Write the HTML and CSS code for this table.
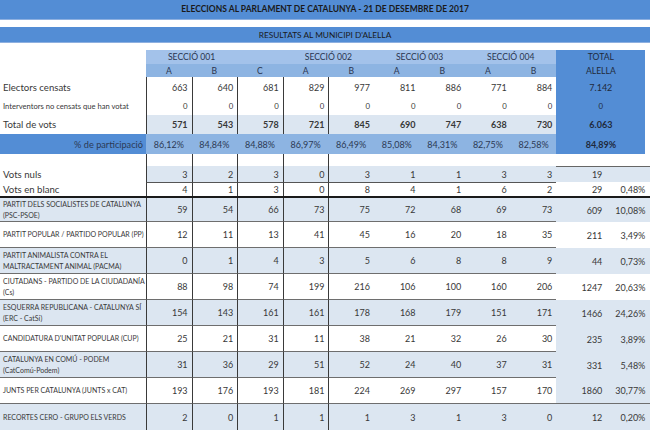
FILE: index.html
```html
<!DOCTYPE html>
<html lang="ca">
<head>
    <meta charset="UTF-8">
    <title>Eleccions al Parlament de Catalunya - Alella</title>
    <link rel="stylesheet" href="styles.css">
</head>
<body>
    <div class="sheet">
        <div class="banner title">ELECCIONS AL PARLAMENT DE CATALUNYA - 21 DE DESEMBRE DE 2017</div>
        <div class="banner subtitle">RESULTATS AL MUNICIPI D'ALELLA</div>

        <div class="row head-sec">
            <div></div>
            <div class="span2">SECCIÓ 001</div>
            <div></div>
            <div class="span2">SECCIÓ 002</div>
            <div class="span2">SECCIÓ 003</div>
            <div class="span2">SECCIÓ 004</div>
            <div class="tot">TOTAL</div>
        </div>
        <div class="row head-ab">
            <div></div>
            <div>A</div><div>B</div><div>C</div>
            <div>A</div><div>B</div>
            <div>A</div><div>B</div>
            <div>A</div><div>B</div>
            <div class="tot">ALELLA</div>
        </div>

        <div class="row lined electors">
            <div class="label">Electors censats</div>
            <div>663</div><div>640</div><div>681</div><div>829</div><div>977</div>
            <div>811</div><div>886</div><div>771</div><div>884</div>
            <div class="tot">7.142</div>
        </div>
        <div class="row lined interv">
            <div class="label">Interventors no censats que han votat</div>
            <div>0</div><div>0</div><div>0</div><div>0</div><div>0</div>
            <div>0</div><div>0</div><div>0</div><div>0</div>
            <div class="tot">0</div>
        </div>
        <div class="row lined votes">
            <div class="label">Total de vots</div>
            <div>571</div><div>543</div><div>578</div><div>721</div><div>845</div>
            <div>690</div><div>747</div><div>638</div><div>730</div>
            <div class="tot">6.063</div>
        </div>
        <div class="row part">
            <div class="label">% de participació</div>
            <div>86,12%</div><div>84,84%</div><div>84,88%</div><div>86,97%</div><div>86,49%</div>
            <div>85,08%</div><div>84,31%</div><div>82,75%</div><div>82,58%</div>
            <div class="tot">84,89%</div>
        </div>

        <div class="row lined spacer">
            <div></div><div></div><div></div><div></div><div></div><div></div>
        </div>

        <div class="row lined nuls">
            <div class="label">Vots nuls</div>
            <div>3</div><div>2</div><div>3</div><div>0</div><div>3</div>
            <div>1</div><div>1</div><div>3</div><div>3</div>
            <div class="count">19</div><div class="pct"></div>
        </div>
        <div class="row lined blanc">
            <div class="label">Vots en blanc</div>
            <div>4</div><div>1</div><div>3</div><div>0</div><div>8</div>
            <div>4</div><div>1</div><div>6</div><div>2</div>
            <div class="count">29</div><div class="pct">0,48%</div>
        </div>

        <div class="row lined party shade first">
            <div class="label">PARTIT DELS SOCIALISTES DE CATALUNYA<br>(PSC-PSOE)</div>
            <div>59</div><div>54</div><div>66</div><div>73</div><div>75</div>
            <div>72</div><div>68</div><div>69</div><div>73</div>
            <div class="count">609</div><div class="pct">10,08%</div>
        </div>
        <div class="row lined party">
            <div class="label">PARTIT POPULAR / PARTIDO POPULAR (PP)</div>
            <div>12</div><div>11</div><div>13</div><div>41</div><div>45</div>
            <div>16</div><div>20</div><div>18</div><div>35</div>
            <div class="count">211</div><div class="pct">3,49%</div>
        </div>
        <div class="row lined party shade">
            <div class="label">PARTIT ANIMALISTA CONTRA EL<br>MALTRACTAMENT ANIMAL (PACMA)</div>
            <div>0</div><div>1</div><div>4</div><div>3</div><div>5</div>
            <div>6</div><div>8</div><div>8</div><div>9</div>
            <div class="count">44</div><div class="pct">0,73%</div>
        </div>
        <div class="row lined party">
            <div class="label">CIUTADANS - PARTIDO DE LA CIUDADANÍA<br>(Cs)</div>
            <div>88</div><div>98</div><div>74</div><div>199</div><div>216</div>
            <div>106</div><div>100</div><div>160</div><div>206</div>
            <div class="count">1247</div><div class="pct">20,63%</div>
        </div>
        <div class="row lined party shade">
            <div class="label">ESQUERRA REPUBLICANA - CATALUNYA SÍ<br>(ERC - CatSí)</div>
            <div>154</div><div>143</div><div>161</div><div>161</div><div>178</div>
            <div>168</div><div>179</div><div>151</div><div>171</div>
            <div class="count">1466</div><div class="pct">24,26%</div>
        </div>
        <div class="row lined party tot-shade">
            <div class="label">CANDIDATURA D'UNITAT POPULAR (CUP)</div>
            <div>25</div><div>21</div><div>31</div><div>11</div><div>38</div>
            <div>21</div><div>32</div><div>26</div><div>30</div>
            <div class="count">235</div><div class="pct">3,89%</div>
        </div>
        <div class="row lined party shade">
            <div class="label">CATALUNYA EN COMÚ - PODEM<br>(CatComú-Podem)</div>
            <div>31</div><div>36</div><div>29</div><div>51</div><div>52</div>
            <div>24</div><div>40</div><div>37</div><div>31</div>
            <div class="count">331</div><div class="pct">5,48%</div>
        </div>
        <div class="row lined party tot-shade ruled">
            <div class="label">JUNTS PER CATALUNYA (JUNTS x CAT)</div>
            <div>193</div><div>176</div><div>193</div><div>181</div><div>224</div>
            <div>269</div><div>297</div><div>157</div><div>170</div>
            <div class="count">1860</div><div class="pct">30,77%</div>
        </div>
        <div class="row lined party shade last">
            <div class="label">RECORTES CERO - GRUPO ELS VERDS</div>
            <div>2</div><div>0</div><div>1</div><div>1</div><div>1</div>
            <div>3</div><div>1</div><div>3</div><div>0</div>
            <div class="count">12</div><div class="pct">0,20%</div>
        </div>
    </div>
</body>
</html>
```

FILE: styles.css
```css
* {
    box-sizing: border-box;
    margin: 0;
    padding: 0;
}

body {
    font-family: Lato, "Open Sans", sans-serif;
    color: #383838;
    background: #fff;
}

.sheet {
    width: 650px;
    overflow: hidden;
}

.banner {
    background-color: #538dd5;
    text-align: center;
    color: #1a1a1a;
    border-bottom: 1px solid #8eb0e0;
}

.title {
    height: 20px;
    line-height: 19px;
    font-size: 8.5px;
    font-weight: bold;
}

.subtitle {
    margin-top: 7px;
    height: 16px;
    line-height: 16px;
    font-size: 8.3px;
    margin-bottom: 7px;
}

.row {
    display: grid;
    grid-template-columns: 146px repeat(9, 45.6px) 48px 46px;
    font-size: 9px;
}

.row > div {
    display: flex;
    align-items: center;
    justify-content: flex-end;
    padding-right: 4px;
    white-space: nowrap;
    min-width: 0;
}

.row > .label {
    justify-content: flex-start;
    padding: 0 0 0 3px;
    font-size: 9.6px;
}

.span2 {
    grid-column: span 2;
}

.row > .tot {
    grid-column: span 2;
    justify-content: center;
    padding: 0;
    margin-right: 5px;
    background-color: #538dd5;
    color: #1f2a3c;
}

.lined > div:nth-child(n+2):nth-child(-n+6) {
    border-left: 1px solid #3a3a3a;
}

/* header */
.head-sec {
    height: 14px;
    color: #2a3550;
    font-size: 8.6px;
}

.head-sec > div:nth-child(n+2):nth-child(-n+6) {
    background-color: #a3c2ea;
    justify-content: center;
    padding: 0;
}

.head-ab {
    height: 13px;
    color: #2a3550;
    font-size: 8.6px;
}

.head-ab > div:nth-child(n+2):nth-child(-n+10) {
    background-color: #8db4e2;
    justify-content: center;
    padding: 0;
}

.electors {
    height: 20px;
}

.interv {
    height: 18px;
    font-size: 7.8px;
}

.row.interv > .label {
    font-size: 7.6px;
}

.votes {
    height: 19px;
}

.votes > div:nth-child(n+2) {
    font-weight: bold;
}

.votes > div:nth-child(n+2):nth-child(-n+10) {
    background-color: #dce6f1;
}

.part {
    height: 20px;
}

.part > div {
    background-color: #8db4e2;
    justify-content: center;
    padding: 0;
    color: #2c3a55;
}

.row.part > .label {
    background-color: #538dd5;
    justify-content: flex-end;
    padding-right: 3px;
    font-size: 9.2px;
}

.part > .tot {
    font-weight: bold;
}

.spacer {
    height: 12px;
}

/* nuls / blanc */
.nuls {
    height: 16px;
}

.nuls > div:nth-child(n+2) {
    background-color: #dce6f1;
}

.nuls > .count,
.nuls > .pct {
    border-top: 1px solid #666;
}

.blanc {
    height: 16px;
    border-bottom: 2px solid #1a1a1a;
}

.blanc > div:nth-child(n+2):nth-child(-n+10) {
    border-top: 1px solid #555;
}

.row > .count {
    padding-right: 2px;
}

.row > .pct {
    padding-right: 5px;
}

/* parties */
.party {
    height: 26px;
}

.party.first {
    height: 24px;
}

.party > div:nth-child(-n+10) {
    border-bottom: 1px solid #6e6e6e;
}

.party.last > div {
    border-bottom: none;
}

.row.party > .label {
    white-space: nowrap;
    font-size: 7px;
    line-height: 1.45;
    color: #3a3a3a;
}

.party.shade > div {
    background-color: #dce6f1;
}

.tot-shade > .count,
.tot-shade > .pct {
    background-color: #dce6f1;
}

.ruled > .count,
.ruled > .pct {
    border-bottom: 1px solid #6e6e6e;
}
```
